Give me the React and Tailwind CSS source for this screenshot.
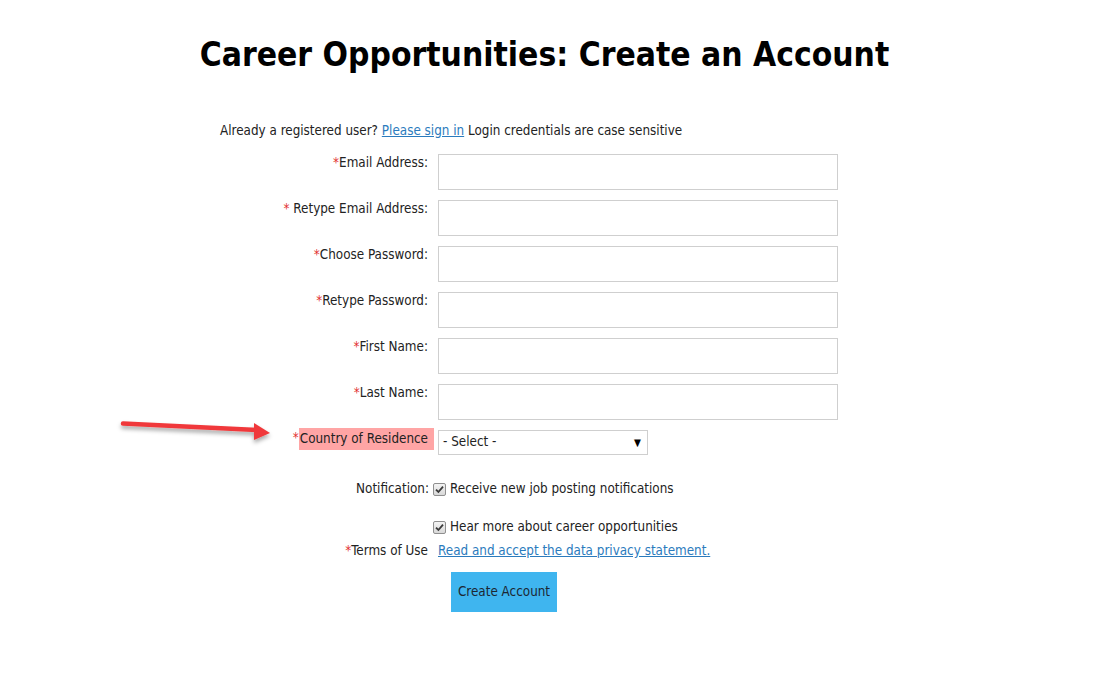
const Req = ({ space }) => (
  <span className="text-[#e2302f]">*{space ? " " : ""}</span>
);

const TextRow = ({ label, space }) => (
  <div className="flex gap-[10px]">
    <div className="w-[208px] text-right pt-[1px] leading-[16px]">
      <Req space={space} />
      {label}
    </div>
    <div className="w-[400px] h-[36px] border border-[#cfcfcf] bg-white" />
  </div>
);

const Check = () => (
  <span className="inline-flex items-center justify-center w-[13px] h-[13px] border border-[#8f8f8f] rounded-[2px] bg-gradient-to-b from-[#f4f4f4] to-[#d8d8d8]">
    <svg width="9" height="9" viewBox="0 0 9 9">
      <path d="M1 4.6 L3.4 7 L8 1.6" fill="none" stroke="#3b3b3b" strokeWidth="1.8" />
    </svg>
  </span>
);

export default function App() {
  return (
    <div
      className="relative min-h-[685px] bg-white text-[13.35px] text-[#222]"
      style={{ fontFamily: '"DejaVu Sans Condensed", "DejaVu Sans", sans-serif' }}
    >
      <h1 className="pt-[35px] pr-[8px] text-center text-[33.3px] font-bold text-black leading-[40px]">
        Career Opportunities: Create an Account
      </h1>

      <div className="ml-[220px] w-[620px] mt-[48px]">
        <div className="leading-[16px]">
          Already a registered user?{" "}
          <a href="#" className="text-[#2b7bbd] underline">
            Please sign in
          </a>{" "}
          Login credentials are case sensitive
        </div>

        <div className="flex flex-col gap-[10px] mt-[15px]">
          <TextRow label="Email Address:" />
          <TextRow label="Retype Email Address:" space />
          <TextRow label="Choose Password:" />
          <TextRow label="Retype Password:" />
          <TextRow label="First Name:" />
          <TextRow label="Last Name:" />

          <div className="flex gap-[4px] items-start -mt-[2px]">
            <div className="w-[214px] flex justify-end items-start">
              <Req />
              <span className="bg-[#ffa5a5] px-[1px] pr-[6px] leading-[22px]">
                Country of Residence
              </span>
            </div>
            <div className="w-[210px] h-[25px] mt-[2px] border border-[#cfcfcf] bg-white flex items-center justify-between pl-[4px] pr-[6px]">
              <span>- Select -</span>
              <span className="text-[10px] text-black">▼</span>
            </div>
          </div>
        </div>

        <div className="flex gap-[4px] mt-[26px] items-center">
          <div className="w-[209px] text-right leading-[16px]">Notification:</div>
          <Check />
          <span className="leading-[16px]">Receive new job posting notifications</span>
        </div>

        <div className="flex gap-[4px] mt-[22px] items-center">
          <div className="w-[209px]" />
          <Check />
          <span className="leading-[16px]">Hear more about career opportunities</span>
        </div>

        <div className="flex gap-[10px] mt-[8px]">
          <div className="w-[208px] text-right leading-[16px]">
            <Req />
            Terms of Use
          </div>
          <a href="#" className="text-[#2b7bbd] underline leading-[16px]">
            Read and accept the data privacy statement.
          </a>
        </div>

        <div className="mt-[13px] pl-[231px]">
          <button className="w-[106px] h-[40px] bg-[#3fb5ef] text-[#1c2733] text-[13.35px]">
            Create Account
          </button>
        </div>
      </div>

      <svg
        className="absolute left-[113px] top-[414px]"
        width="170"
        height="36"
        viewBox="0 0 170 36"
      >
        <defs>
          <filter id="sh" x="-10%" y="-50%" width="120%" height="200%">
            <feDropShadow dx="0" dy="3" stdDeviation="2" floodColor="#000" floodOpacity="0.35" />
          </filter>
        </defs>
        <g filter="url(#sh)">
          <path d="M10 9.5 L144 16" stroke="#f0393a" strokeWidth="4.5" strokeLinecap="round" />
          <path d="M141 9 L157 19 L141 26 Z" fill="#f0393a" />
        </g>
      </svg>
    </div>
  );
}
